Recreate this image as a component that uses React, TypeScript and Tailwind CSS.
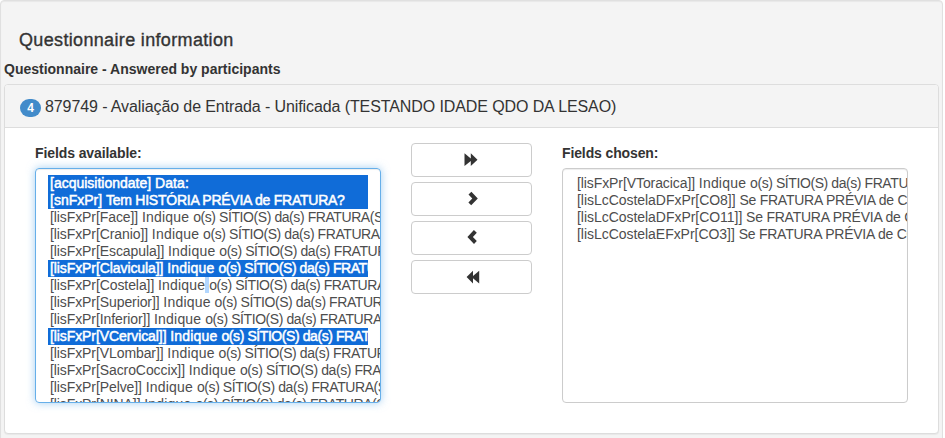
import React from "react";

type Field = { name: string; question: string; selected?: boolean; mark?: boolean };

const SITES = "Indique o(s) SÍTIO(S) da(s) FRATURA(S):";

const available: Field[] = [
  { name: "[acquisitiondate]", question: "Data:", selected: true },
  { name: "[snFxPr]", question: "Tem HISTÓRIA PRÉVIA de FRATURA?", selected: true },
  { name: "[lisFxPr[Face]]", question: SITES },
  { name: "[lisFxPr[Cranio]]", question: SITES },
  { name: "[lisFxPr[Escapula]]", question: SITES },
  { name: "[lisFxPr[Clavicula]]", question: SITES, selected: true },
  { name: "[lisFxPr[Costela]]", question: SITES, mark: true },
  { name: "[lisFxPr[Superior]]", question: SITES },
  { name: "[lisFxPr[Inferior]]", question: SITES },
  { name: "[lisFxPr[VCervical]]", question: SITES, selected: true },
  { name: "[lisFxPr[VLombar]]", question: SITES },
  { name: "[lisFxPr[SacroCoccix]]", question: SITES },
  { name: "[lisFxPr[Pelve]]", question: SITES },
  { name: "[lisFxPr[NINA]]", question: SITES },
];

const chosen: Field[] = [
  { name: "[lisFxPr[VToracica]]", question: SITES },
  { name: "[lisLcCostelaDFxPr[CO8]]", question: "Se FRATURA PRÉVIA de COSTELA" },
  { name: "[lisLcCostelaDFxPr[CO11]]", question: "Se FRATURA PRÉVIA de COSTELA" },
  { name: "[lisLcCostelaEFxPr[CO3]]", question: "Se FRATURA PRÉVIA de COSTELA" },
];

const moves = [
  { label: "Add all", d: "M4.5 3.3v12.8l6.3-5.2v5.2l6.7-6.4-6.7-6.4v5.2z" },
  { label: "Add", d: "M11.4 2.7 L17.8 9.4 L11.2 16.3 L8.4 13.5 L12.3 9.5 L8.5 5.5z" },
  { label: "Remove", d: "M13.9 2 L16.8 4.8 L12.9 9 L16.8 13 L14 16 L7.4 9.1z" },
  { label: "Remove all", d: "M19.2 3.7v12.8l-6.2-5.2v5.2L6.6 10.1l6.4-6.4v5.2z" },
];

function FieldText({ name, question, mark }: Field) {
  if (question === SITES) {
    return (
      <>
        <span className="tracking-[-0.09px]">{name} </span>
        <span className="tracking-[0.2px]">Indique</span>
        <span className={mark ? "bg-[#b3d7ff]" : ""}> </span>
        <span className="tracking-[-0.42px]">{question.slice(8)}</span>
      </>
    );
  }
  const tracking = question.startsWith("Se")
    ? "tracking-[-0.24px]"
    : question.startsWith("Tem")
      ? "tracking-[-0.25px]"
      : "tracking-[0.06px]";
  return (
    <>
      <span className={question.startsWith("Se") ? "tracking-[-0.04px]" : ""}>{name} </span>
      <span className={tracking}>{question}</span>
    </>
  );
}

export default function App() {
  return (
    <div className="h-[438px] w-[945px] overflow-hidden bg-white font-['Liberation_Sans',Arial,sans-serif] text-sm text-[#333]">
      <div className="h-[450px] w-[943px] rounded-[4px] border border-[#e0e0e0] bg-[#f4f4f4] pt-[27px] pr-1 pl-[3px] shadow-[inset_0_1px_1px_rgba(0,0,0,0.05)]">
        <h4 className="ml-[15px] h-6 text-[18px] leading-6 tracking-[0.34px] [-webkit-text-stroke:0.35px_#333]">Questionnaire information</h4>
        <div className="mt-[7px] h-5 leading-5 font-bold whitespace-nowrap">Questionnaire - Answered by participants</div>
        <section className="mt-[5px] h-[350px] w-[935px] rounded-[4px] border border-[#ddd] bg-white shadow-[0_1px_1px_rgba(0,0,0,0.05)]">
          <header className="flex h-[43px] items-center rounded-t-[3px] border-b border-[#ddd] bg-[#f4f4f4] pl-[15px]">
            <span className="mt-[3px] mr-1 flex h-[18px] w-[21px] items-center justify-center rounded-[10px] bg-[#428bca] text-xs leading-none font-bold text-white">4</span>
            <span className="pt-0.5 text-base leading-[18px] tracking-[-0.1px] whitespace-nowrap">879749 - Avaliação de Entrada - Unificada (TESTANDO IDADE QDO DA LESAO)</span>
          </header>
          <div className="flex pt-[15px] pl-[30px]">
            <div className="w-[346px]">
              <label className="block h-[25px] leading-5 font-bold tracking-[-0.1px]">Fields available:</label>
              <div className="h-[235px] overflow-hidden rounded-[4px] border border-[#66afe9] pt-1.5 pl-3 leading-[17px] text-[#4d4d4d] shadow-[inset_0_1px_1px_rgba(0,0,0,0.075),0_0_8px_rgba(102,175,233,0.6)]">
                {available.map((f) => (
                  <div
                    key={f.name}
                    className={
                      f.selected
                        ? "mr-3 h-[17px] overflow-hidden bg-[#106cd8] pl-0.5 whitespace-nowrap text-white [-webkit-text-stroke:0.5px_white]"
                        : "h-[17px] pl-0.5 whitespace-nowrap"
                    }
                  >
                    <FieldText {...f} />
                  </div>
                ))}
              </div>
            </div>
            <div className="ml-[30px] flex w-[121px] flex-col gap-[5px]">
              {moves.map((m) => (
                <button key={m.label} aria-label={m.label} className="flex h-[34px] items-center justify-center rounded-[4px] border border-[#ccc] bg-white text-[#333]">
                  <svg className="h-5 w-6" viewBox="0 0 24 20" fill="currentColor">
                    <path d={m.d} />
                  </svg>
                </button>
              ))}
            </div>
            <div className="ml-[30px] w-[346px]">
              <label className="block h-[25px] leading-5 font-bold tracking-[-0.12px]">Fields chosen:</label>
              <div className="h-[235px] overflow-hidden rounded-[4px] border border-[#ccc] pt-1.5 pl-3.5 leading-[17px] text-[#4d4d4d] shadow-[inset_0_1px_1px_rgba(0,0,0,0.075)]">
                {chosen.map((f) => (
                  <div key={f.name} className="h-[17px] whitespace-nowrap">
                    <FieldText {...f} />
                  </div>
                ))}
              </div>
            </div>
          </div>
        </section>
      </div>
    </div>
  );
}
